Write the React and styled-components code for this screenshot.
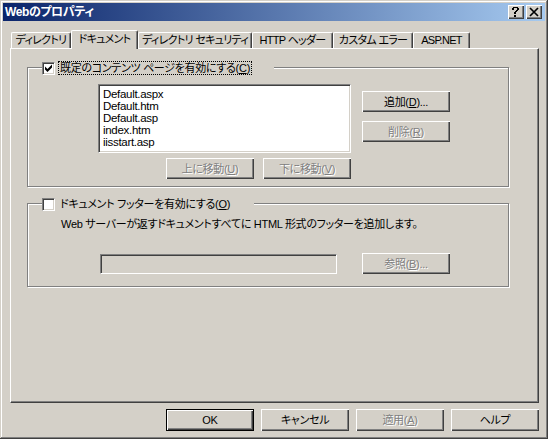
import React from "react";
import styled, { createGlobalStyle, css } from "styled-components";

const GlobalStyle = createGlobalStyle`
  html, body {
    margin: 0;
    padding: 0;
    background: #d4d0c8;
  }
  * {
    box-sizing: border-box;
  }
  body {
    font-family: "Liberation Sans", "Noto Sans CJK JP", sans-serif;
    font-size: 11px;
    letter-spacing: -0.3px;
    font-feature-settings: "palt" 1;
    color: #000;
  }
`;

const tabs = [
  { label: "ディレクトリ", w: 60 },
  { label: "ドキュメント", w: 67, active: true },
  { label: "ディレクトリ セキュリティ", w: 114 },
  { label: "HTTP ヘッダー", w: 81 },
  { label: "カスタム エラー", w: 80 },
  { label: "ASP.NET", w: 57 },
];

const files = ["Default.aspx", "Default.htm", "Default.asp", "index.htm", "iisstart.asp"];

const raised = css`
  box-shadow: inset 1px 1px 0 #fff, inset -1px -1px 0 #404040,
    inset -2px -2px 0 #808080;
`;

const HelpGlyph = () => (
  <svg width="16" height="14" viewBox="0 0 16 14" shapeRendering="crispEdges">
    <g fill="#000">
      <rect x="5" y="2" width="5" height="1" />
      <rect x="4" y="3" width="2" height="2" />
      <rect x="9" y="3" width="2" height="2" />
      <rect x="8" y="5" width="2" height="1" />
      <rect x="7" y="6" width="2" height="1" />
      <rect x="6" y="7" width="2" height="2" />
      <rect x="6" y="10" width="2" height="2" />
    </g>
  </svg>
);

const CloseGlyph = () => (
  <svg width="16" height="14" viewBox="0 0 16 14">
    <path d="M4 3 L12 11 M12 3 L4 11" stroke="#000" strokeWidth="1.7" />
  </svg>
);

const CheckMark = () => (
  <svg width="11" height="11" viewBox="0 0 11 11">
    <path d="M2 3.5 L4.5 6 L9 1.5 L9 4.5 L4.5 9 L2 6.5 Z" fill="#000" />
  </svg>
);

const App = () => {
  return (
    <>
      <GlobalStyle />
      <Window>
        <TitleBar>
          <Title>Webのプロパティ</Title>
          <CaptionButtons>
            <CaptionButton>
              <HelpGlyph />
            </CaptionButton>
            <CaptionButton>
              <CloseGlyph />
            </CaptionButton>
          </CaptionButtons>
        </TitleBar>

        <Body>
          <TabStrip>
            {tabs.map((t) => (
              <Tab key={t.label} $w={t.w} $active={t.active}>
                {t.label}
              </Tab>
            ))}
          </TabStrip>

          <Panel>
            <GroupBox $h={120}>
              <GroupHeader>
                <Checkbox>
                  <CheckMark />
                </Checkbox>
                <CheckLabel $focused>
                  既定のコンテンツ ページを有効にする(<u>C</u>)
                </CheckLabel>
              </GroupHeader>

              <ListRow>
                <ListBox>
                  {files.map((f) => (
                    <ListItem key={f}>{f}</ListItem>
                  ))}
                </ListBox>
                <SideButtons>
                  <Button>
                    追加(<u>D</u>)...
                  </Button>
                  <Button disabled>
                    削除(<u>R</u>)
                  </Button>
                </SideButtons>
              </ListRow>

              <MoveRow>
                <Button disabled>
                  上に移動(<u>U</u>)
                </Button>
                <Button disabled>
                  下に移動(<u>V</u>)
                </Button>
              </MoveRow>
            </GroupBox>

            <GroupBox $h={84} $gap={16}>
              <GroupHeader>
                <Checkbox />
                <CheckLabel>
                  ドキュメント フッターを有効にする(<u>O</u>)
                </CheckLabel>
              </GroupHeader>
              <Description>
                Web サーバーが返すドキュメントすべてに HTML 形式のフッターを追加します。
              </Description>
              <FooterRow>
                <TextBox />
                <Button disabled>
                  参照(<u>B</u>)...
                </Button>
              </FooterRow>
            </GroupBox>
          </Panel>

          <Footer>
            <Button $default $h={22}>
              OK
            </Button>
            <Button $h={22}>キャンセル</Button>
            <Button disabled $h={22}>
              適用(<u>A</u>)
            </Button>
            <Button $h={22}>ヘルプ</Button>
          </Footer>
        </Body>
      </Window>
    </>
  );
};

const Window = styled.div`
  width: 548px;
  height: 439px;
  padding: 3px;
  background: #d4d0c8;
  display: flex;
  flex-direction: column;
  box-shadow: inset -1px -1px 0 #404040, inset 1px 1px 0 #d4d0c8,
    inset -2px -2px 0 #808080, inset 2px 2px 0 #fff;
`;

const TitleBar = styled.div`
  height: 18px;
  display: flex;
  align-items: center;
  justify-content: space-between;
  padding: 0 3px 0 2px;
  background: linear-gradient(to right, #0a246a, #a6caf0);
`;

const Title = styled.span`
  color: #fff;
  font-weight: bold;
  font-size: 12px;
  letter-spacing: -0.4px;
  line-height: 14px;
`;

const CaptionButtons = styled.div`
  display: flex;
  gap: 2px;
`;

const CaptionButton = styled.div`
  width: 16px;
  height: 14px;
  background: #d4d0c8;
  display: flex;
  ${raised}
`;

const Body = styled.div`
  flex: 1;
  display: flex;
  flex-direction: column;
  padding: 11px 6px 0 7px;
`;

const TabStrip = styled.div`
  height: 16px;
  display: flex;
  align-items: flex-end;
  padding-left: 1px;
`;

const Tab = styled.div`
  position: relative;
  width: ${(p) => p.$w}px;
  height: ${(p) => (p.$active ? 19 : 16)}px;
  margin-bottom: ${(p) => (p.$active ? -1 : 0)}px;
  z-index: ${(p) => (p.$active ? 1 : 0)};
  display: flex;
  align-items: center;
  justify-content: center;
  padding-bottom: ${(p) => (p.$active ? 2 : 0)}px;
  background: #d4d0c8;
  border-top: 1px solid #fff;
  border-left: 1px solid #fff;
  border-right: 1px solid #404040;
  border-radius: 2px 2px 0 0;
  box-shadow: inset -1px 0 0 #808080;
  white-space: nowrap;
  letter-spacing: -0.7px;
  line-height: 13px;
`;

const Panel = styled.div`
  height: 355px;
  display: flex;
  flex-direction: column;
  align-items: flex-start;
  padding: 18px 0 0 16px;
  border-top: 1px solid #fff;
  border-left: 1px solid #fff;
  border-right: 1px solid #404040;
  border-bottom: 1px solid #404040;
  box-shadow: inset -1px -1px 0 #808080;
`;

const GroupBox = styled.div`
  width: 482px;
  height: ${(p) => p.$h}px;
  margin-top: ${(p) => p.$gap || 0}px;
  display: flex;
  flex-direction: column;
  align-items: flex-start;
  border: 1px solid #808080;
  box-shadow: inset 1px 1px 0 #fff, 1px 1px 0 #fff;
`;

const GroupHeader = styled.div`
  display: flex;
  align-items: center;
  margin: -7px 0 0 14px;
  padding-right: 22px;
  height: 14px;
  background: #d4d0c8;
`;

const Checkbox = styled.div`
  width: 13px;
  height: 13px;
  flex-shrink: 0;
  background: #fff;
  border-top: 1px solid #808080;
  border-left: 1px solid #808080;
  border-right: 1px solid #fff;
  border-bottom: 1px solid #fff;
  box-shadow: inset 1px 1px 0 #404040, inset -1px -1px 0 #d4d0c8;
  display: flex;
`;

const CheckLabel = styled.span`
  margin-left: 3px;
  padding: 0 1px;
  line-height: 12px;
  white-space: nowrap;
  border: 1px dotted ${(p) => (p.$focused ? "#000" : "transparent")};
`;

const ListRow = styled.div`
  display: flex;
  align-items: flex-start;
  margin: 9px 0 0 70px;
`;

const ListBox = styled.div`
  width: 253px;
  height: 69px;
  background: #fff;
  padding: 3px 2px 0 4px;
  border-top: 1px solid #808080;
  border-left: 1px solid #808080;
  border-right: 1px solid #fff;
  border-bottom: 1px solid #fff;
  box-shadow: inset 1px 1px 0 #404040, inset -1px -1px 0 #d4d0c8;
`;

const ListItem = styled.div`
  height: 12px;
  line-height: 12px;
  font-size: 11.5px;
  white-space: nowrap;
`;

const SideButtons = styled.div`
  display: flex;
  flex-direction: column;
  gap: 9px;
  margin-left: 11px;
  padding-top: 7px;
`;

const MoveRow = styled.div`
  display: flex;
  gap: 9px;
  margin: 5px 0 0 138px;
`;

const Description = styled.div`
  margin: 6px 0 0 33px;
  line-height: 14px;
  white-space: nowrap;
`;

const FooterRow = styled.div`
  display: flex;
  align-items: center;
  margin: 22px 0 0 72px;
`;

const TextBox = styled.div`
  width: 237px;
  height: 20px;
  margin-right: 25px;
  background: #d4d0c8;
  border-top: 1px solid #808080;
  border-left: 1px solid #808080;
  border-right: 1px solid #fff;
  border-bottom: 1px solid #fff;
  box-shadow: inset 1px 1px 0 #404040, inset -1px -1px 0 #d4d0c8;
`;

const Button = styled.button`
  width: 88px;
  height: ${(p) => p.$h || 21}px;
  padding: 0;
  font: inherit;
  letter-spacing: inherit;
  line-height: 12px;
  background: #d4d0c8;
  color: ${(p) => (p.disabled ? "#808080" : "#000")};
  text-shadow: ${(p) => (p.disabled ? "1px 1px 0 #fff" : "none")};
  border: ${(p) => (p.$default ? "1px solid #000" : "none")};
  border-radius: 0;
  white-space: nowrap;
  ${raised}
  ${(p) =>
    p.$default &&
    css`
      box-shadow: inset 1px 1px 0 #fff, inset -1px -1px 0 #404040,
        inset -2px -2px 0 #808080;
    `}
  u {
    text-decoration-thickness: 1px;
  }
`;

const Footer = styled.div`
  display: flex;
  justify-content: flex-end;
  gap: 7px;
  margin-top: 6px;
`;

export default App;
